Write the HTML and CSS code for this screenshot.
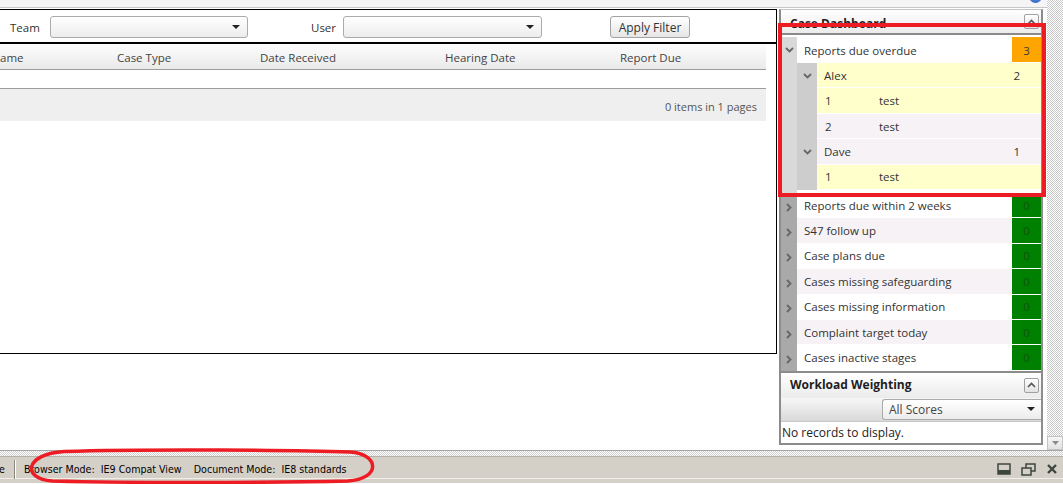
FILE: index.html
```html
<!doctype html>
<html>
<head>
<meta charset="utf-8">
<title>Case Dashboard</title>
<link rel="stylesheet" href="styles.css">
</head>
<body>
	<div id="screen">
		<div class="workArea">
			<div class="topStrip"><span class="helpDot"></span></div>
			<div class="panes">
				<div id="cases">
					<div class="filterBar">
						<label class="fLabel team">Team</label>
						<div class="selectBox wide"><span class="caret"></span></div>
						<label class="fLabel user">User</label>
						<div class="selectBox wide user"><span class="caret"></span></div>
						<button type="button" class="applyBtn">Apply Filter</button>
					</div>
					<div class="gridHead">
						<span>ame</span>
						<span>Case Type</span>
						<span>Date Received</span>
						<span>Hearing Date</span>
						<span>Report Due</span>
					</div>
					<div class="gridEmpty"></div>
					<div class="pager">0 items in 1 pages</div>
				</div>
				<div id="side">
					<div class="widget dash">
						<div class="wHead">
							<span class="wTitle">Case Dashboard</span>
							<span class="toggle"><svg width="9" height="6" viewBox="0 0 9 6"><polyline points="1,5 4.5,1.5 8,5" fill="none" stroke="#555" stroke-width="1.6"/></svg></span>
						</div>
						<div class="dashBody">
							<div class="dRow first">
								<span class="g1"><svg width="9" height="6" viewBox="0 0 9 6"><polyline points="1,1 4.5,4.5 8,1" fill="none" stroke="#666" stroke-width="1.8"/></svg></span>
								<span class="cell white">Reports due overdue</span>
								<span class="count orange">3</span>
							</div>
							<div class="dRow">
								<span class="g1"></span>
								<span class="g2"><svg width="9" height="6" viewBox="0 0 9 6"><polyline points="1,1 4.5,4.5 8,1" fill="none" stroke="#666" stroke-width="1.8"/></svg></span>
								<span class="cell yellow sub"><span class="who">Alex</span><span class="subCount">2</span></span>
							</div>
							<div class="dRow">
								<span class="g1"></span>
								<span class="g2"></span>
								<span class="cell yellow item"><span class="num">1</span>test</span>
							</div>
							<div class="dRow">
								<span class="g1"></span>
								<span class="g2"></span>
								<span class="cell lilac item"><span class="num">2</span>test</span>
							</div>
							<div class="dRow">
								<span class="g1"></span>
								<span class="g2"><svg width="9" height="6" viewBox="0 0 9 6"><polyline points="1,1 4.5,4.5 8,1" fill="none" stroke="#666" stroke-width="1.8"/></svg></span>
								<span class="cell lilac sub"><span class="who">Dave</span><span class="subCount">1</span></span>
							</div>
							<div class="dRow">
								<span class="g1"></span>
								<span class="g2"></span>
								<span class="cell yellow item"><span class="num">1</span>test</span>
							</div>
							<div class="nestEnd"><span class="g1"></span></div>
							<div class="dRow closed">
								<span class="g1"><svg width="6" height="9" viewBox="0 0 6 9"><polyline points="1,1 4.5,4.5 1,8" fill="none" stroke="#666" stroke-width="1.8"/></svg></span>
								<span class="cell">Reports due within 2 weeks</span>
								<span class="count green">0</span>
							</div>
							<div class="dRow closed">
								<span class="g1"><svg width="6" height="9" viewBox="0 0 6 9"><polyline points="1,1 4.5,4.5 1,8" fill="none" stroke="#666" stroke-width="1.8"/></svg></span>
								<span class="cell">S47 follow up</span>
								<span class="count green">0</span>
							</div>
							<div class="dRow closed">
								<span class="g1"><svg width="6" height="9" viewBox="0 0 6 9"><polyline points="1,1 4.5,4.5 1,8" fill="none" stroke="#666" stroke-width="1.8"/></svg></span>
								<span class="cell">Case plans due</span>
								<span class="count green">0</span>
							</div>
							<div class="dRow closed">
								<span class="g1"><svg width="6" height="9" viewBox="0 0 6 9"><polyline points="1,1 4.5,4.5 1,8" fill="none" stroke="#666" stroke-width="1.8"/></svg></span>
								<span class="cell">Cases missing safeguarding</span>
								<span class="count green">0</span>
							</div>
							<div class="dRow closed">
								<span class="g1"><svg width="6" height="9" viewBox="0 0 6 9"><polyline points="1,1 4.5,4.5 1,8" fill="none" stroke="#666" stroke-width="1.8"/></svg></span>
								<span class="cell">Cases missing information</span>
								<span class="count green">0</span>
							</div>
							<div class="dRow closed">
								<span class="g1"><svg width="6" height="9" viewBox="0 0 6 9"><polyline points="1,1 4.5,4.5 1,8" fill="none" stroke="#666" stroke-width="1.8"/></svg></span>
								<span class="cell">Complaint target today</span>
								<span class="count green">0</span>
							</div>
							<div class="dRow closed">
								<span class="g1"><svg width="6" height="9" viewBox="0 0 6 9"><polyline points="1,1 4.5,4.5 1,8" fill="none" stroke="#666" stroke-width="1.8"/></svg></span>
								<span class="cell">Cases inactive stages</span>
								<span class="count green">0</span>
							</div>
						</div>
					</div>
					<div class="widget weight">
						<div class="wHead">
							<span class="wTitle">Workload Weighting</span>
							<span class="toggle"><svg width="9" height="6" viewBox="0 0 9 6"><polyline points="1,5 4.5,1.5 8,5" fill="none" stroke="#555" stroke-width="1.6"/></svg></span>
						</div>
						<div class="wTools">
							<div class="selectBox scores">All Scores<span class="caret"></span></div>
						</div>
						<div class="noRec">No records to display.</div>
					</div>
				</div>
			</div>
		</div>
		<div class="scrollTrack">
			<span class="scrollDown"><svg width="7" height="4" viewBox="0 0 7 4"><polygon points="0,0 7,0 3.5,4" fill="#8a8a8a"/></svg></span>
		</div>
	</div>
	<div class="statusGap"></div>
	<div id="statusBar">
		<span class="cutText">e</span>
		<span class="sep"></span>
		<span class="modes">Browser Mode:  IE9 Compat View    Document Mode:  IE8 standards</span>
		<span class="barIcons">
			<svg width="14" height="12" viewBox="0 0 14 12"><rect x="1" y="1" width="12" height="10" fill="none" stroke="#3c463c" stroke-width="1.5"/><rect x="1" y="7" width="12" height="4" fill="#3c463c"/></svg>
			<svg class="restore" width="15" height="13" viewBox="0 0 15 13"><rect x="5" y="1" width="9" height="7" fill="none" stroke="#3c463c" stroke-width="1.5"/><rect x="1" y="5" width="9" height="7" fill="#d4d0c8" stroke="#3c463c" stroke-width="1.5"/></svg>
			<svg class="close" width="10" height="10" viewBox="0 0 10 10"><path d="M1 1 L9 9 M9 1 L1 9" stroke="#3c463c" stroke-width="2.4"/></svg>
		</span>
	</div>
	<div class="mark"></div>
	<svg class="markRing" width="364" height="36" viewBox="0 0 364 36"><path d="M46 3.5 C130 1 280 2 332 4 C362 6 363 31 330 33 C240 35 110 35 34 33 C4 31 6 6 46 3.5 Z" fill="none" stroke="#ed1c24" stroke-width="3.5"/></svg>
</body>
</html>
```

FILE: styles.css
```css
body {
	margin: 0;
	width: 1063px;
	height: 484px;
	overflow: hidden;
	position: relative;
	font: 11.5px/1.3 "Open Sans", "Liberation Sans", sans-serif;
	color: #333;
	background: #fff;
}
#screen {
	display: flex;
	height: 450px;
}
.workArea {
	width: 1047px;
}
.topStrip {
	height: 7px;
	background: #f5f5f5;
	border-bottom: 1px solid #c8c8c8;
	margin-bottom: 1px;
	display: flex;
	justify-content: flex-end;
	padding-right: 5px;
	overflow: hidden;
}
.helpDot {
	width: 13px;
	height: 13px;
	margin-top: -10px;
	border-radius: 50%;
	background: radial-gradient(circle at 50% 30%, #6d9be0, #2a62c0);
}
.panes {
	display: flex;
	align-items: flex-start;
}

/* left: case list */
#cases {
	width: 776px;
	height: 343px;
	border: 1px solid #000;
	border-left: none;
}
.filterBar {
	display: flex;
	align-items: center;
	height: 32px;
	border-bottom: 2px solid #000;
}
.fLabel {
	padding-top: 4px;
	color: #333;
}
.fLabel.team {
	margin-left: 10px;
	width: 40px;
}
.fLabel.user {
	margin-left: 63px;
	width: 32px;
}
.selectBox {
	box-sizing: border-box;
	height: 22px;
	margin-top: 1px;
	border: 1px solid #ababab;
	border-radius: 3px;
	background: linear-gradient(#fff, #ececec);
	display: flex;
	align-items: center;
	color: #444;
}
.selectBox.wide {
	width: 198px;
}
.selectBox.user {
	width: 199px;
}
.caret {
	margin-left: auto;
	margin-right: 7px;
	width: 0;
	height: 0;
	border-left: 4px solid transparent;
	border-right: 4px solid transparent;
	border-top: 4px solid #222;
}
.applyBtn {
	margin: 1px 0 0 68px;
	width: 80px;
	height: 22px;
	padding: 2px 0 0;
	border: 1px solid #a3a3a3;
	border-radius: 3px;
	background: linear-gradient(#fff, #e6e6e6);
	font: 12px "Open Sans", "Liberation Sans", sans-serif;
	color: #333;
}
.gridHead {
	display: grid;
	grid-template-columns: 117px 143px 185px 175px 1fr;
	align-items: center;
	height: 25px;
	margin-right: 10px;
	background: linear-gradient(#fdfdfd, #eaeaea);
	border-bottom: 1px solid #9c9c9c;
	color: #444;
}
.gridHead span {
	padding-top: 4px;
}
.gridEmpty {
	height: 18px;
	margin-right: 10px;
	border-bottom: 1px solid #9c9c9c;
}
.pager {
	box-sizing: border-box;
	height: 32px;
	margin-right: 10px;
	padding: 4px 9px 0 0;
	background: #efefef;
	display: flex;
	align-items: center;
	justify-content: flex-end;
	font-size: 11px;
	color: #555;
}

/* right: widgets */
#side {
	margin-left: 2px;
	width: 264px;
}
.widget {
	border: 2px solid #8c8c8c;
}
.widget.dash {
	border-top: 1px solid #c4c4c4;
}
.widget.weight {
	border-top: none;
}
.wHead {
	height: 23px;
	display: flex;
	align-items: center;
	justify-content: space-between;
	padding: 0 2px 0 9px;
	background: linear-gradient(#fff, #ebebeb);
	font-weight: 700;
	font-size: 12px;
	color: #1e1e1e;
}
.dash .wTitle {
	padding-top: 4px;
}
.weight .wHead {
	height: 25px;
}
.toggle {
	width: 15px;
	height: 15px;
	box-sizing: border-box;
	border: 1px solid #a0a0a0;
	border-radius: 2px;
	background: linear-gradient(#fff, #e2e2e2);
	display: flex;
	align-items: center;
	justify-content: center;
}
.dashBody {
	border-top: 2px solid #8a8a8a;
	padding-top: 2px;
}
.dRow {
	display: flex;
	height: 25.4px;
}
.dRow.first {
	height: 26px;
}
.g1,
.g2 {
	flex: none;
	display: flex;
	align-items: center;
	justify-content: center;
}
.g1 {
	width: 16px;
	background: #d9d9d9;
}
.g2 {
	width: 20px;
	background: #cdcdcd;
}
.cell {
	flex: 1;
	display: flex;
	align-items: center;
	padding: 2px 0 0 7px;
	border-bottom: 1px solid #fff;
	white-space: nowrap;
}
.first .cell,
.first .count {
	padding-top: 4px;
}
.white {
	background: #fff;
}
.yellow {
	background: #ffffcc;
}
.lilac {
	background: #f6f2f6;
}
.sub .who {
	flex: 1;
}
.subCount {
	margin-right: 21px;
}
.item {
	padding-left: 8px;
}
.num {
	width: 54px;
}
.count {
	width: 29px;
	flex: none;
	display: flex;
	align-items: center;
	justify-content: center;
	padding-top: 2px;
	border-bottom: 1px solid #fff;
}
.orange {
	background: #ffa500;
	color: #3a3a3a;
}
.green {
	background: #008000;
	color: #0b560b;
}
.nestEnd {
	display: flex;
	height: 3px;
}
.closed .g1 {
	background: #a9a9a9;
}
.closed .g1 svg {
	margin-top: 3px;
}
.closed:nth-of-type(odd) .cell {
	background: #f6f2f6;
}
.closed:nth-of-type(even) .cell {
	background: #fff;
}
.wTools {
	height: 23px;
	display: flex;
	justify-content: flex-end;
	background: linear-gradient(#f7f7f7, #d9d9d9);
	border-bottom: 1px solid #c8c8c8;
}
.selectBox.scores {
	width: 159px;
	height: 21px;
	padding: 2px 0 0 6px;
	border-right: none;
	border-radius: 3px 0 0 3px;
	font-size: 12px;
}
.scores .caret {
	margin: -2px 6px 0 auto;
}
.noRec {
	height: 21px;
	padding: 1px 0 0 1px;
	box-sizing: border-box;
	display: flex;
	align-items: center;
	font-size: 12px;
	color: #222;
}
.scrollTrack {
	width: 16px;
	display: flex;
	flex-direction: column;
	justify-content: flex-end;
	background-color: #fff;
	background-image: repeating-conic-gradient(#c8c8c8 0 25%, #fff 0 50%);
	background-size: 2px 2px;
}
.scrollDown {
	height: 14px;
	box-sizing: border-box;
	border: 1px solid #c4c4c4;
	background: linear-gradient(#f6f6f6, #e2e2e2);
	display: flex;
	align-items: center;
	justify-content: center;
}

/* status bar */
.statusGap {
	height: 5px;
	border-top: 1px solid #a5a5a5;
	background-color: #fff;
	background-image: repeating-conic-gradient(#cfcfcf 0 25%, #fff 0 50%);
	background-size: 2px 2px;
}
#statusBar {
	height: 27px;
	box-sizing: border-box;
	border-top: 1px solid #b3b0a8;
	background: #d4d0c8;
	box-shadow: inset 0 -4px 0 #d4d0c8, inset 0 -5px 0 #f1efea;
	display: flex;
	align-items: center;
	padding-bottom: 2px;
	font: 10.6px "DejaVu Sans Condensed", "Liberation Sans", sans-serif;
	color: #000;
}
.cutText {
	margin-left: -1px;
}
.sep {
	width: 0;
	height: 19px;
	margin-left: 9px;
	border-left: 1px solid #8a877f;
	border-right: 1px solid #fff;
}
.modes {
	margin-left: 8px;
	white-space: pre;
}
.barIcons {
	margin-left: auto;
	margin-right: 6px;
	display: flex;
	align-items: center;
}
.barIcons .restore {
	margin-left: 10px;
}
.barIcons .close {
	margin-left: 11px;
}

/* red annotation marks */
.mark {
	position: absolute;
	left: 778px;
	top: 23px;
	width: 268px;
	height: 174px;
	box-sizing: border-box;
	border: 4px solid #ed1c24;
}
.markRing {
	position: absolute;
	left: 18px;
	top: 448px;
}
```
